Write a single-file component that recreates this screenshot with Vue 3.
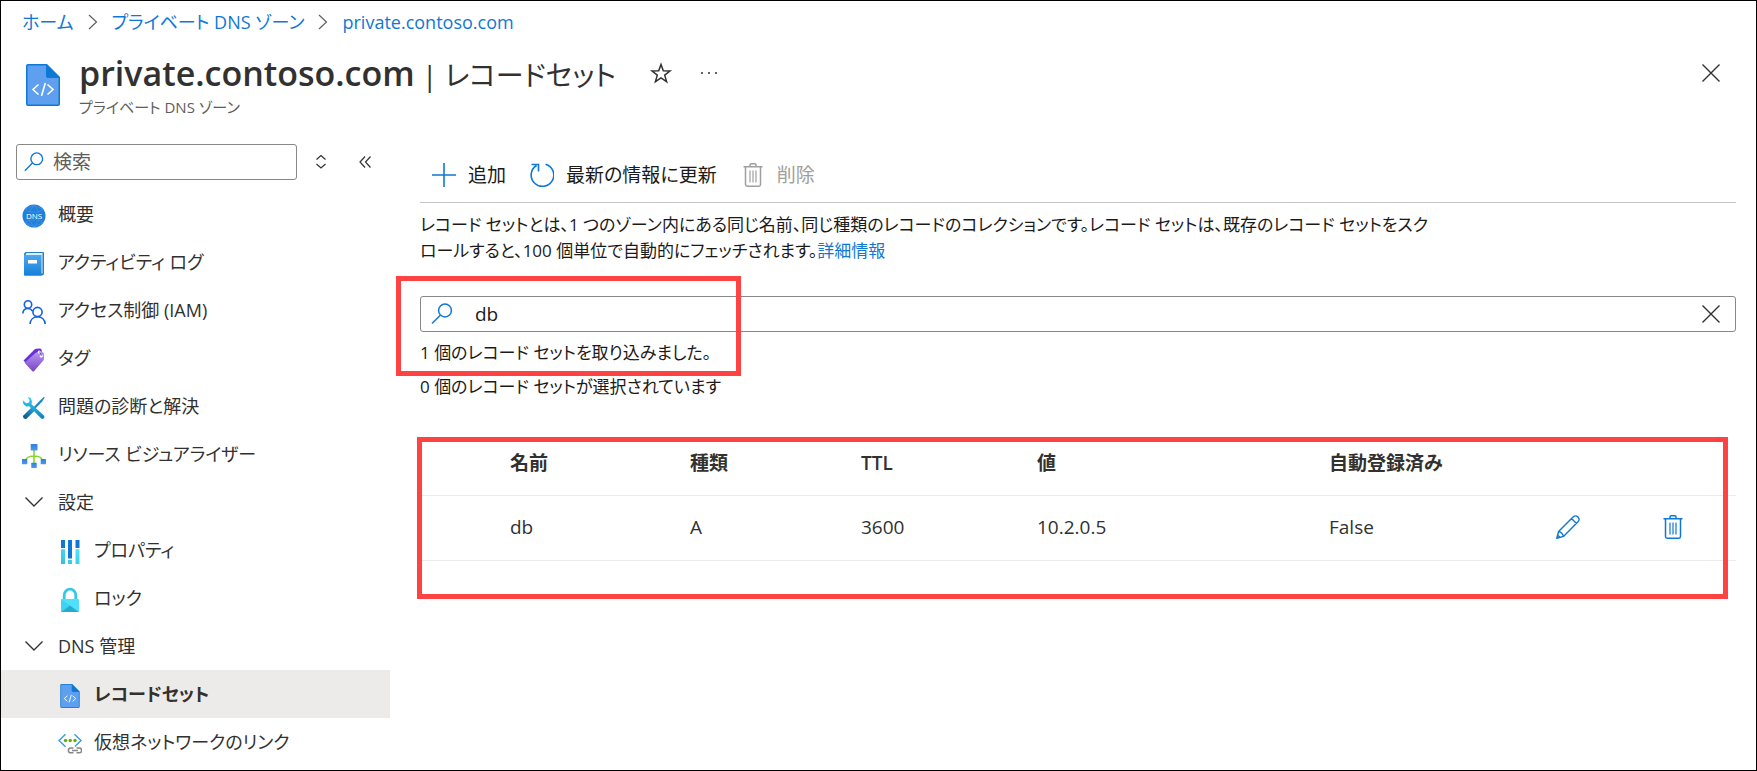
<script setup>
import { ref } from 'vue'

const menuQuery = ref('')
const recordQuery = ref('db')

const menu = [
  { label: '概要', icon: 'dns' },
  { label: 'アクティビティ ログ', icon: 'log' },
  { label: 'アクセス制御 (IAM)', icon: 'people' },
  { label: 'タグ', icon: 'tag' },
  { label: '問題の診断と解決', icon: 'tools' },
  { label: 'リソース ビジュアライザー', icon: 'tree' },
  { label: '設定', icon: 'chevron', group: true },
  { label: 'プロパティ', icon: 'bars', child: true },
  { label: 'ロック', icon: 'lock', child: true },
  { label: 'DNS 管理', icon: 'chevron', group: true },
  { label: 'レコードセット', icon: 'doc', child: true, active: true },
  { label: '仮想ネットワークのリンク', icon: 'vnet', child: true }
]

const records = [
  { name: 'db', type: 'A', ttl: '3600', value: '10.2.0.5', auto: 'False' }
]
</script>

<template>
  <div class="page">
    <svg class="sprite" aria-hidden="true">
      <defs>
        <linearGradient id="gBlue" x1="0" y1="0" x2="0" y2="1">
          <stop offset="0" stop-color="#50a8ee" /><stop offset="1" stop-color="#1380da" />
        </linearGradient>
        <linearGradient id="gNode" x1="0" y1="0" x2="0" y2="1">
          <stop offset="0" stop-color="#2f7fe0" /><stop offset="1" stop-color="#4f98ee" />
        </linearGradient>
        <linearGradient id="gTag" x1="0" y1="0" x2="0" y2="1">
          <stop offset="0" stop-color="#b796f9" /><stop offset="1" stop-color="#7a45bd" />
        </linearGradient>
        <linearGradient id="gTool" x1="0" y1="0" x2="0" y2="1">
          <stop offset="0" stop-color="#32d4f5" /><stop offset="1" stop-color="#0f7fbd" />
        </linearGradient>
        <linearGradient id="gDriver" x1="1" y1="0" x2="0" y2="1">
          <stop offset="0" stop-color="#2ba6d8" /><stop offset="1" stop-color="#0a4f86" />
        </linearGradient>
        <linearGradient id="gCyan" x1="1" y1="0" x2="0" y2="1">
          <stop offset="0" stop-color="#50e6ff" /><stop offset="1" stop-color="#32bedd" />
        </linearGradient>
      </defs>
      <symbol id="dns" viewBox="0 0 24 24">
        <circle cx="12" cy="12" r="11.5" fill="#1f7fda" />
        <g fill="none" stroke="#4795e4" stroke-width=".7">
          <path d="M3 5 12 1.500 21 5M3 19l9 3.500L21 19M3 5l4 3M21 5l-4 3M3 19l4-3M21 19l-4-3M12 1.500 7 8M12 1.500 17 8M12 22.500 7 16M12 22.500l5-6.500M7 8h10M7 16h10" />
        </g>
      </symbol>
      <symbol id="log" viewBox="0 0 24 24">
        <path d="M4.500 0H21a1 1 0 0 1 1 1v20.500a2 2 0 0 1-2 2H3a1 1 0 0 1-1-1V2.500A2.500 2.500 0 0 1 4.500 0z" fill="#2483bd" />
        <path d="M4.500 1H20.500v20.500H19V3H3.500z" fill="#d9f0ff" />
        <path d="M2 3h17.500v20.500H3a1 1 0 0 1-1-1z" fill="url(#gBlue)" />
        <rect x="6" y="8" width="9" height="3.500" fill="#fff" />
      </symbol>
      <symbol id="people" viewBox="0 0 24 24">
        <g fill="none" stroke="#0f62e0" stroke-width="1.600">
          <circle cx="6" cy="4.500" r="3.700" /><path d="M.8 13.500C1 10.500 3.200 8.500 6 8.500c2 0 3.500 1 4.500 2.500" />
          <circle cx="15.500" cy="12" r="4.600" /><path d="M8 24c.4-4.500 3.500-7.200 7.500-7.200S22.700 19.500 23.200 24" />
        </g>
      </symbol>
      <symbol id="tag" viewBox="0 0 24 24">
        <path d="M1.500 12.500 12.500 1.400q.6-.7 1.600-.7L18 .6q1.600 0 1.700 1.600V6q0 1-.7 1.700L7.500 19z" fill="#6b2fd6" />
        <path d="M2.500 14.800 13.500 5q.7-.7 1.700-.7l5-.2q1.600 0 1.700 1.600l.1 5q0 1-.7 1.700L12 23.200q-.8.700-1.600 0z" fill="url(#gTag)" />
        <circle cx="17.200" cy="4" r="1.500" fill="#fff" /><circle cx="19.300" cy="8" r="1.600" fill="#fff" />
        <path d="M17.200 3.800q2 1 2.100 4" fill="none" stroke="#4c1e9c" stroke-width=".8" />
      </symbol>
      <symbol id="tools" viewBox="0 0 24 24">
        <path d="m22 .8.700.7-2.700 4.300-6.600 6.800-1.600-1.600 6.500-6.800z" fill="#1c8abf" />
        <path d="m9.500 11.500 3.200 3.200-8.200 8q-1.300 1-2.700-.4-1.500-1.500-.4-2.800z" fill="url(#gDriver)" />
        <path d="M5.500.8 8.900 2.200 10 5.500 9.500 8.300l12.400 11.200q1.300 1.400 0 2.800-1.400 1.400-2.900 0L7.200 10.300l-3 .2L1.300 8 .8 4.300l3.500 2.900 2.800-.6.500-2.500z" fill="url(#gTool)" />
      </symbol>
      <symbol id="tree" viewBox="0 0 24 24">
        <path d="M12 5v15M3 18c.5-4.500 3.500-6 9-6s8.500 1.500 9 6" fill="none" stroke="#86d633" stroke-width="1.600" />
        <rect x="8.700" y="0" width="6.800" height="6.500" rx=".7" fill="url(#gNode)" />
        <rect x="0" y="15" width="5.300" height="5.300" rx=".6" fill="url(#gNode)" />
        <rect x="9.300" y="18.700" width="5.400" height="5.300" rx=".6" fill="url(#gNode)" />
        <rect x="18.700" y="15" width="5.300" height="5.300" rx=".6" fill="url(#gNode)" />
      </symbol>
      <symbol id="chevron" viewBox="0 0 24 24">
        <path d="m3.500 5.500 8.500 8.500 8.500-8.500" fill="none" stroke="#323130" stroke-width="1.400" />
      </symbol>
      <symbol id="bars" viewBox="0 0 24 24">
        <path d="M3 0h4v8H3zM10 0h4v18.500h-4zM17.500 0h4v8h-4z" fill="#0f78d4" />
        <path d="M3 9.200h4V24H3zM10 20h4v4h-4zM17.500 9.200h4V24h-4z" fill="url(#gCyan)" />
      </symbol>
      <symbol id="lock" viewBox="0 0 24 24">
        <path d="M6.200 12V7a5.800 5.800 0 0 1 11.600 0v5" fill="none" stroke="#32c8ea" stroke-width="2.800" />
        <rect x="3" y="11" width="18" height="13" rx=".8" fill="#50e0fa" />
        <path d="M3.200 11.200 12 17.500l-8.800 6.300z" fill="#3fd3f0" />
        <path d="M3.200 23.900 12 17.500l8.800 6.400z" fill="#23acd0" />
      </symbol>
      <symbol id="doc" viewBox="0 0 34 42">
        <path d="M2 0h19l13 13v27a2 2 0 0 1-2 2H2a2 2 0 0 1-2-2V2a2 2 0 0 1 2-2z" fill="#0f78d4" />
        <path d="M1.500 1.500H20V12a2 2 0 0 0 2 2h10.500v26.500h-31z" fill="#5ea0ef" />
        <path d="m12.500 20.500-5.500 5 5.500 5M21.500 20.500l5.500 5-5.500 5M19.300 19l-3.800 13" fill="none" stroke="#fff" stroke-width="1.600" />
      </symbol>
      <symbol id="vnet" viewBox="0 0 24 24">
        <path d="M7.500 2.200 1 8.500l6.500 6.300" fill="none" stroke="#3ba0d8" stroke-width="1.500" />
        <path d="m16.500 2.200 6.500 6.300-6 6" fill="none" stroke="#3ba0d8" stroke-width="1.500" />
        <g fill="#62ab12"><circle cx="7.500" cy="8.500" r="1.700" /><circle cx="12.200" cy="8.500" r="1.700" /><circle cx="17" cy="8.500" r="1.700" /></g>
        <path d="M15.500 16h-2.700a2.400 2.400 0 0 0 0 4.800h2.700M18.500 16h2.700a2.400 2.400 0 0 1 0 4.800h-2.700M14 18.400h6" fill="none" stroke="#8a8886" stroke-width="1.500" />
      </symbol>
      <symbol id="magnifier" viewBox="0 0 24 24">
        <circle cx="15" cy="8.500" r="6.400" fill="none" stroke="#0f78d4" stroke-width="1.500" />
        <path d="M10.300 13.200 2 21.500" stroke="#0f78d4" stroke-width="1.500" />
      </symbol>
      <symbol id="cross" viewBox="0 0 24 24">
        <path d="m3.500 3.500 17 17M20.500 3.500l-17 17" stroke="#323130" stroke-width="1.400" />
      </symbol>
      <symbol id="trash" viewBox="0 0 24 24">
        <g fill="none" stroke="currentColor" stroke-width="1.500">
          <path d="M2.500 3.700h19M9 3.500V2q0-1.200 1.200-1.200h3.600Q15 .8 15 2v1.500M4.500 4v17.500q0 1.700 1.700 1.700h11.600q1.700 0 1.700-1.700V4" />
          <path d="M9 7.500v12M12 7.500v12M15 7.500v12" stroke-width="1.200" />
        </g>
      </symbol>
      <symbol id="pencil" viewBox="0 0 24 24">
        <g fill="none" stroke="currentColor" stroke-width="1.400" stroke-linejoin="round">
          <path d="M.8 23.200 2.600 16.500 17 2q2.500-2.200 4.900-.1 2.300 2.400.1 4.900L7.500 21.400zM15.500 3.500l5 5M2.600 16.500q3.800 1 4.900 4.900M2 20.500l1.800 1.600" />
        </g>
      </symbol>
    </svg>

    <nav class="crumbs" aria-label="階層">
      <a href="#">ホーム</a>
      <svg viewBox="0 0 10 16"><path d="m1 1 7.500 7L1 15" /></svg>
      <a href="#">プライベート DNS ゾーン</a>
      <svg viewBox="0 0 10 16"><path d="m1 1 7.500 7L1 15" /></svg>
      <a href="#">private.contoso.com</a>
    </nav>

    <header class="head">
      <svg class="head-icon"><use href="#doc" /></svg>
      <div class="head-text">
        <div class="title-row">
          <h1><b>private.contoso.com</b><span> | レコードセット</span></h1>
          <button class="plain star" aria-label="お気に入り">
            <svg viewBox="0 0 24 24"><path d="m12 3.500 2.300 6.300 6.700.2-5.300 4.100 1.900 6.500-5.600-3.800-5.600 3.800 1.900-6.500L3 10l6.700-.2z" fill="none" stroke="#323130" stroke-width="1.500" /></svg>
          </button>
          <button class="plain" aria-label="その他">
            <svg viewBox="0 0 24 24"><g fill="#323130"><circle cx="5" cy="12" r="1" /><circle cx="12" cy="12" r="1" /><circle cx="19" cy="12" r="1" /></g></svg>
          </button>
        </div>
        <p class="subtitle">プライベート DNS ゾーン</p>
      </div>
      <button class="plain close" aria-label="閉じる"><svg><use href="#cross" /></svg></button>
    </header>

    <div class="body">
      <aside class="side">
        <div class="side-top">
          <label class="box side-search">
            <svg><use href="#magnifier" /></svg>
            <input v-model="menuQuery" type="text" placeholder="検索" aria-label="検索" />
          </label>
          <button class="plain sort" aria-label="展開">
            <svg viewBox="0 0 24 24"><path d="m7.500 9.500 4.500-4 4.500 4M7.500 14l4.500 4 4.500-4" fill="none" stroke="#323130" stroke-width="1.200" /></svg>
          </button>
          <button class="plain" aria-label="折りたたむ">
            <svg viewBox="0 0 24 24"><path d="M12 6.500 7 12l5 5.500M17.500 6.500l-5 5.500 5 5.500" fill="none" stroke="#323130" stroke-width="1.200" /></svg>
          </button>
        </div>
        <ul class="menu">
          <li v-for="item in menu" :key="item.label">
            <button v-if="item.group" class="item"><svg><use :href="'#' + item.icon" /></svg>{{ item.label }}</button>
            <a v-else href="#" class="item" :class="{ child: item.child, active: item.active }">
              <svg>
                <use :href="'#' + item.icon" />
                <text v-if="item.icon === 'dns'" x="12" y="15" text-anchor="middle" class="dns-text">DNS</text>
              </svg>{{ item.label }}
            </a>
          </li>
        </ul>
      </aside>

      <main class="main">
        <div class="toolbar">
          <button class="tool">
            <svg viewBox="0 0 24 24"><path d="M12 0v24M0 12h24" stroke="#0f78d4" stroke-width="1.600" /></svg>追加
          </button>
          <button class="tool">
            <svg viewBox="0 0 24 24"><path d="M15.500 1.200a11.300 11.300 0 1 1-9 1.300M1.500 1.500h7v7" fill="none" stroke="#0f78d4" stroke-width="1.600" /></svg>最新の情報に更新
          </button>
          <button class="tool" disabled>
            <svg><use href="#trash" /></svg>削除
          </button>
        </div>

        <p class="intro">レコード セットとは、1 つのゾーン内にある同じ名前、同じ種類のレコードのコレクションです。レコード セットは、既存のレコード セットをスク<br />ロールすると、100 個単位で自動的にフェッチされます。<a href="#">詳細情報</a></p>

        <section class="filter">
          <div class="box filter-box">
            <svg><use href="#magnifier" /></svg>
            <input v-model="recordQuery" type="text" aria-label="レコード セットの検索" />
            <button class="plain" aria-label="クリア" @click="recordQuery = ''"><svg><use href="#cross" /></svg></button>
          </div>
          <p>1 個のレコード セットを取り込みました。</p>
          <p>0 個のレコード セットが選択されています</p>
          <div class="mark"></div>
        </section>

        <section class="records">
          <table>
            <colgroup><col v-for="n in 8" :key="n" /></colgroup>
            <thead>
              <tr>
                <td></td>
                <th scope="col">名前</th>
                <th scope="col">種類</th>
                <th scope="col">TTL</th>
                <th scope="col">値</th>
                <th scope="col">自動登録済み</th>
                <td></td>
                <td></td>
              </tr>
            </thead>
            <tbody>
              <tr v-for="r in records" :key="r.name">
                <td></td>
                <td>{{ r.name }}</td>
                <td>{{ r.type }}</td>
                <td>{{ r.ttl }}</td>
                <td>{{ r.value }}</td>
                <td>{{ r.auto }}</td>
                <td><button class="plain row-action" aria-label="編集"><svg><use href="#pencil" /></svg></button></td>
                <td><button class="plain row-action" aria-label="削除"><svg><use href="#trash" /></svg></button></td>
              </tr>
            </tbody>
          </table>
          <div class="mark"></div>
        </section>
      </main>
    </div>
  </div>
</template>

<style>
body {
  background: #fff;
}
</style>

<style scoped>
.page {
  box-sizing: border-box;
  min-height: 100vh;
  border: 1px solid #000;
  font-family: "Open Sans", "Noto Sans CJK JP", sans-serif;
  font-size: 19px;
  line-height: 26px;
  font-feature-settings: "palt";
  color: #323130;
}
.sprite {
  position: absolute;
  width: 0;
  height: 0;
}
.dns-text {
  font-size: 8px;
  fill: #fff;
}
svg {
  display: block;
  flex: none;
  width: 24px;
  height: 24px;
}
a {
  color: #0f78d4;
  text-decoration: none;
}
p {
  margin: 0;
}
button,
input {
  font: inherit;
  font-feature-settings: inherit;
  color: inherit;
}
.plain {
  display: block;
  flex: none;
  padding: 0;
  border: 0;
  background: none;
}

.crumbs {
  display: flex;
  align-items: center;
  gap: 14px;
  height: 42px;
  padding-left: 21px;
  font-size: 18px;
}
.crumbs svg {
  width: 10px;
  height: 16px;
  fill: none;
  stroke: #605e5c;
  stroke-width: 1.2;
}

.head {
  display: flex;
  align-items: flex-start;
  height: 101px;
  padding: 8px 33px 0 25px;
  box-sizing: border-box;
}
.head-icon {
  width: 34px;
  height: 42px;
  margin-top: 13px;
}
.head-text {
  flex: 1;
  margin-left: 19px;
}
.title-row {
  display: flex;
  align-items: center;
  gap: 24px;
  height: 44px;
}
h1 {
  margin: 0;
  font-size: 34px;
  line-height: 44px;
  font-weight: 400;
}
h1 b {
  font-weight: 600;
}
h1 span {
  font-size: 28px;
  line-height: 32px;
}
.star {
  margin-left: 9px;
}
.subtitle {
  font-size: 15px;
  line-height: 24px;
  color: #605e5c;
}
.close {
  margin-top: 10px;
}

.body {
  display: flex;
}
.side {
  flex: 0 0 389px;
}
.side-top {
  display: flex;
  align-items: center;
  padding-left: 15px;
  margin-bottom: 10px;
}
.box {
  display: flex;
  align-items: center;
  box-sizing: border-box;
  height: 36px;
  border: 1px solid #8a8886;
  border-radius: 3px;
}
.box input {
  flex: 1;
  min-width: 0;
  padding: 0;
  border: 0;
  outline: 0;
  background: none;
}
.side-search {
  width: 281px;
  padding: 0 6px;
  gap: 8px;
}
.side-search svg {
  width: 22px;
  height: 22px;
}
.side-search input::placeholder {
  color: #605e5c;
  opacity: 1;
}
.side-top .sort {
  margin: 0 20px 0 12px;
}

.menu {
  margin: 0;
  padding: 0;
  list-style: none;
  font-size: 18px;
}
.item {
  display: flex;
  align-items: center;
  gap: 12px;
  box-sizing: border-box;
  width: 100%;
  height: 48px;
  padding: 0 0 0 21px;
  border: 0;
  background: none;
  color: #323130;
  text-align: left;
}
.item svg {
  margin-top: 4px;
}
.child {
  padding-left: 57px;
}
.active {
  background: #edebe9;
  font-weight: 600;
}

.main {
  flex: 1;
  min-width: 0;
  margin: 0 20px 0 30px;
}
.toolbar {
  display: flex;
  align-items: center;
  gap: 24px;
  height: 58px;
  padding-left: 12px;
  border-bottom: 1px solid #c8c6c4;
  color: #1b1a19;
}
.tool {
  display: flex;
  align-items: center;
  gap: 12px;
  padding: 4px 0 0;
  border: 0;
  background: none;
}
.tool:disabled {
  color: #a19f9d;
}
.intro {
  margin: 9px 0 32px;
  font-size: 17px;
  color: #1b1a19;
}
.filter {
  position: relative;
  color: #1b1a19;
}
.filter-box {
  padding: 0 12px 0 9px;
}
.filter-box input {
  margin-left: 21px;
}
.filter p {
  margin-top: 8px;
  font-size: 17px;
}
.mark {
  position: absolute;
  box-sizing: border-box;
  border: 5px solid #ff4343;
  pointer-events: none;
}
.filter .mark {
  left: -24px;
  top: -20px;
  width: 345px;
  height: 100px;
}

.records {
  position: relative;
  margin-top: 31px;
}
.records .mark {
  inset: 6px 8px -38px -3px;
}
table {
  width: 100%;
  table-layout: fixed;
  border-collapse: separate;
  border-spacing: 0;
}
col:nth-child(1) { width: 90px; }
col:nth-child(2) { width: 180px; }
col:nth-child(3) { width: 171px; }
col:nth-child(4) { width: 176px; }
col:nth-child(5) { width: 292px; }
col:nth-child(6) { width: 227px; }
col:nth-child(7) { width: 105px; }
col:nth-child(8) { width: 75px; }
th,
td {
  box-sizing: border-box;
  height: 65px;
  padding: 0;
  border-bottom: 1px solid #edebe9;
  text-align: left;
}
tbody td {
  padding-bottom: 2px;
}
th {
  font-weight: 600;
}
.row-action {
  color: #0f78d4;
}
</style>
